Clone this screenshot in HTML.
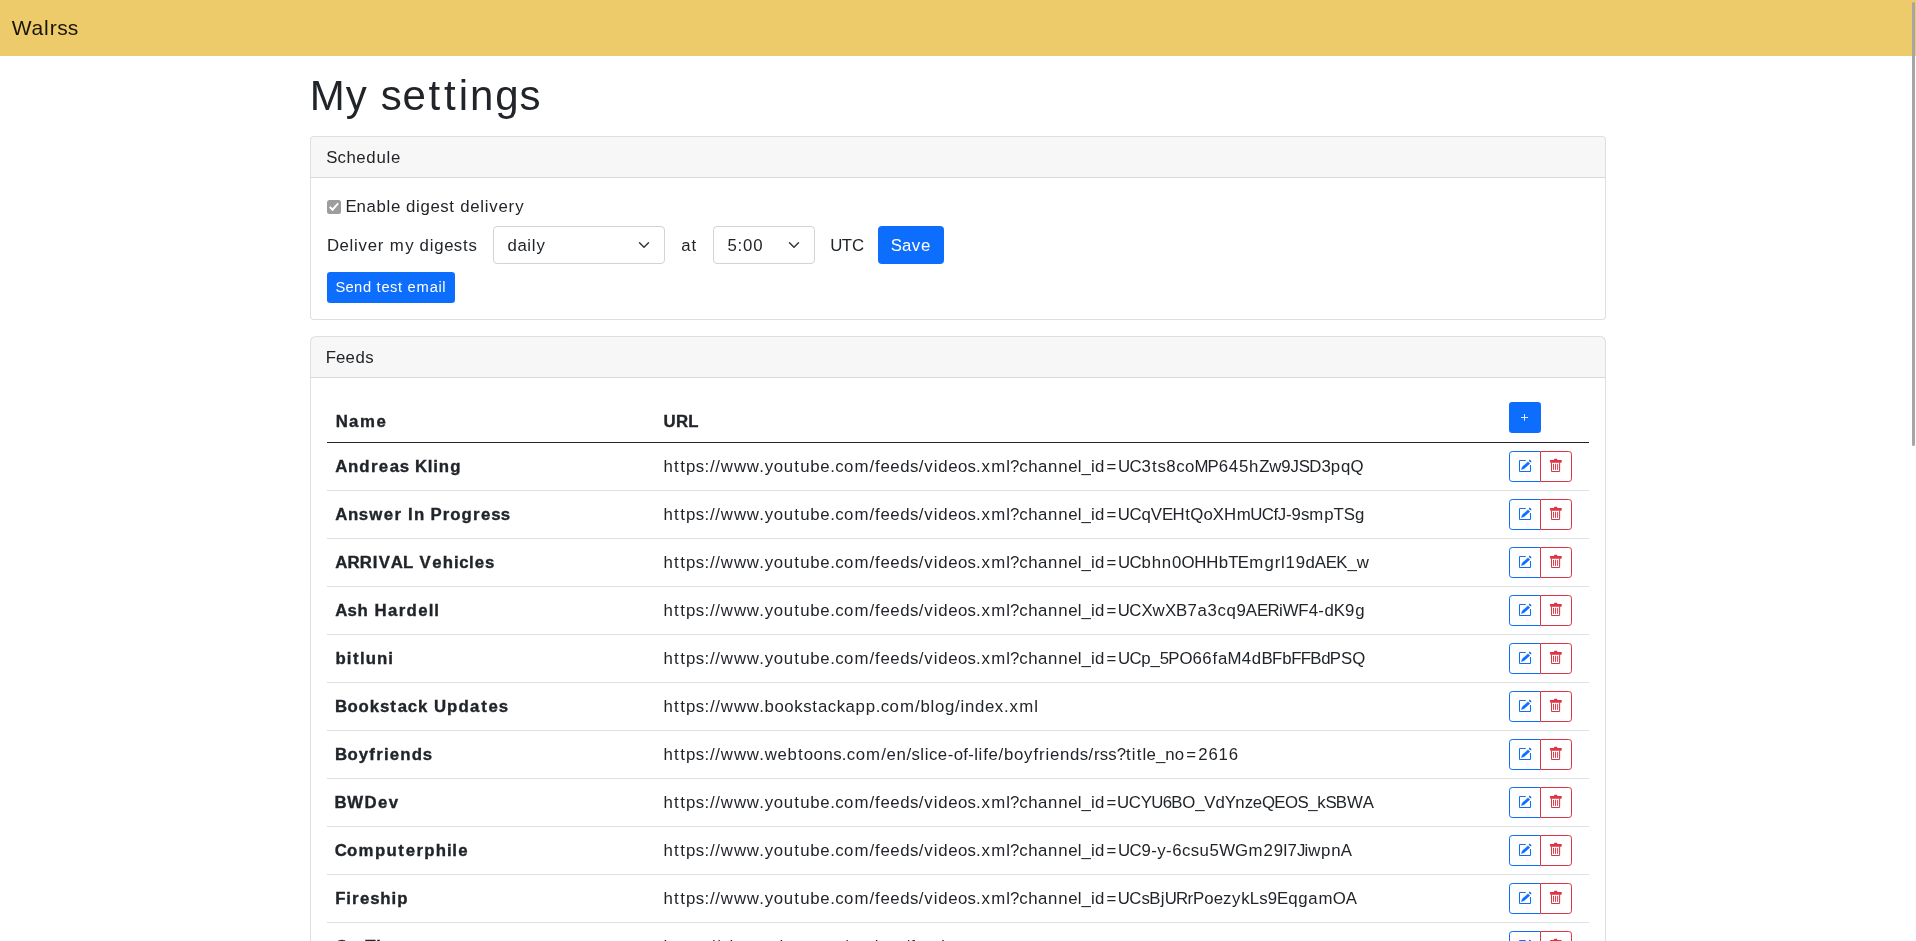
<!DOCTYPE html>
<html><head><meta charset="utf-8"><title>Walrss</title>
<style>
*{box-sizing:border-box}
html,body{margin:0;padding:0;background:#fff}
.container,.nav{will-change:transform}
body{font-family:'Liberation Sans', sans-serif;font-size:16.80px;line-height:24px;color:#212529;width:1916px;height:941px;overflow:hidden;position:relative}
.nav{height:56px;background:#edca6a;position:relative}
.brand{position:absolute;left:12px;top:13px;font-size:21.00px;line-height:30px;color:rgba(0,0,0,.9);white-space:pre}
.container{position:absolute;left:310px;top:72px;width:1296px}
h1{margin:0;font-size:42.00px;line-height:48px;font-weight:400;white-space:pre;height:48px}
.card{position:absolute;left:0;width:1296px;border:1px solid rgba(0,0,0,.125);border-radius:4px;background:#fff}
.card-h{height:41px;padding:8px 16px;background:rgba(0,0,0,.03);border-bottom:1px solid rgba(0,0,0,.125);border-radius:3px 3px 0 0;white-space:pre}
.dn{position:relative;top:1px}
.abs{position:absolute;white-space:pre}
.chk{position:absolute;left:16px;top:22px;width:14px;height:14px;background:#9d9d9d;border-radius:2.5px}
.sel{position:absolute;top:48px;height:38px;border:1px solid #ced4da;border-radius:4px;padding:6px 13px;white-space:pre;background:#fff}
.sel svg{position:absolute;right:12px;top:12px}
.btn{position:absolute;background:#0d6efd;color:#fff;border-radius:4px;white-space:pre;text-align:center}
table{position:absolute;left:16px;top:16px;width:1262px;border-collapse:collapse}
th,td{padding:8px;text-align:left;font-weight:700}
td{font-weight:400;border-bottom:1px solid #dee2e6;vertical-align:middle;height:48px}
th{vertical-align:bottom;height:48px}
thead tr{border-bottom:1px solid #212529}
.c1{width:328px} .c2{width:846px} .c3{width:88px}
td b{font-weight:700;white-space:pre}
th span,td b span{-webkit-text-stroke:0.35px currentColor}
td span{white-space:pre}
i{font-style:normal}
.bg{display:flex;height:31px}
.ob{width:32px;height:31px;border:1px solid;position:relative;background:#fff}
.ic{position:absolute;display:block}
.ob-p{border-color:#0d6efd;border-radius:3.2px 0 0 3.2px}
.ob-d{border-color:#dc3545;border-radius:0 3.2px 3.2px 0;margin-left:-1px}
.pbtn{width:32px;height:31px;background:#0d6efd;border-radius:3.2px;position:relative;top:-1px}
.sb{position:absolute;left:1911.5px;top:2px;width:3px;height:444px;background:#a6a6a6;border-radius:1.5px}
</style></head><body>
<div class="nav"><div class="brand"><span style="margin-left:-0.27px"><i style="letter-spacing:0.01px">W</i><i style="letter-spacing:0.73px">a</i><i style="letter-spacing:1.05px">l</i><i style="letter-spacing:0.54px">r</i><i style="letter-spacing:0.00px">s</i><i style="letter-spacing:-0.07px">s</i></span></div></div>
<div class="container">
<h1><span style="margin-left:-0.24px"><i style="letter-spacing:1.09px">M</i><i style="letter-spacing:1.86px">y</i><i style="letter-spacing:0.45px"> </i><i style="letter-spacing:0.55px">s</i><i style="letter-spacing:2.62px">e</i><i style="letter-spacing:4.02px">t</i><i style="letter-spacing:2.88px">t</i><i style="letter-spacing:1.89px">i</i><i style="letter-spacing:2.01px">n</i><i style="letter-spacing:0.94px">g</i><i style="letter-spacing:-0.07px">s</i></span></h1>
<div class="card" style="top:64px;height:184px">
 <div class="card-h"><span class="dn" style="margin-left:-0.68px"><i style="letter-spacing:0.00px">S</i><i style="letter-spacing:0.44px">c</i><i style="letter-spacing:0.65px">h</i><i style="letter-spacing:0.66px">e</i><i style="letter-spacing:0.80px">d</i><i style="letter-spacing:0.76px">u</i><i style="letter-spacing:0.60px">l</i><i style="letter-spacing:0.26px">e</i></span></div>
 <div style="position:relative">
  <div class="chk"><svg width="14" height="14" viewBox="0 0 14 14" style="display:block"><path d="M2.8 6.9L5.5 9.7L11.1 3.4" fill="none" stroke="#fff" stroke-width="2"/></svg></div>
  <div class="abs" style="left:35px;top:17px"><span style="margin-left:-0.55px"><i style="letter-spacing:-0.15px">E</i><i style="letter-spacing:0.63px">n</i><i style="letter-spacing:0.63px">a</i><i style="letter-spacing:0.76px">b</i><i style="letter-spacing:0.61px">l</i><i style="letter-spacing:0.46px">e</i><i style="letter-spacing:0.61px"> </i><i style="letter-spacing:0.76px">d</i><i style="letter-spacing:0.77px">i</i><i style="letter-spacing:0.66px">g</i><i style="letter-spacing:0.23px">e</i><i style="letter-spacing:0.77px">s</i><i style="letter-spacing:1.02px">t</i><i style="letter-spacing:0.61px"> </i><i style="letter-spacing:0.66px">d</i><i style="letter-spacing:0.60px">e</i><i style="letter-spacing:0.72px">l</i><i style="letter-spacing:0.89px">i</i><i style="letter-spacing:0.79px">v</i><i style="letter-spacing:0.74px">e</i><i style="letter-spacing:1.03px">r</i><i style="letter-spacing:0.55px">y</i></span></div>
  <div class="abs" style="left:16px;top:56px"><span style="margin-left:0.10px"><i style="letter-spacing:0.34px">D</i><i style="letter-spacing:0.60px">e</i><i style="letter-spacing:0.72px">l</i><i style="letter-spacing:0.89px">i</i><i style="letter-spacing:0.79px">v</i><i style="letter-spacing:0.74px">e</i><i style="letter-spacing:0.70px">r</i><i style="letter-spacing:1.02px"> </i><i style="letter-spacing:1.34px">m</i><i style="letter-spacing:0.74px">y</i><i style="letter-spacing:0.62px"> </i><i style="letter-spacing:0.77px">d</i><i style="letter-spacing:0.76px">i</i><i style="letter-spacing:0.66px">g</i><i style="letter-spacing:0.22px">e</i><i style="letter-spacing:0.78px">s</i><i style="letter-spacing:0.77px">t</i><i style="letter-spacing:-0.02px">s</i></span></div>
  <div class="sel" style="left:182px;width:172px"><span class="dn" style="margin-left:0.41px"><i style="letter-spacing:0.64px">d</i><i style="letter-spacing:0.58px">a</i><i style="letter-spacing:0.72px">i</i><i style="letter-spacing:0.89px">l</i><i style="letter-spacing:0.55px">y</i></span><svg width="16" height="12" viewBox="0 0 16 16" ><path d="m2 5 6 6 6-6" fill="none" stroke="#343a40" stroke-width="2" stroke-linecap="round" stroke-linejoin="round"/></svg></div>
  <div class="abs" style="left:370px;top:56px"><span style="margin-left:0.23px"><i style="letter-spacing:1.02px">a</i><i style="letter-spacing:0.80px">t</i></span></div>
  <div class="sel" style="left:402px;width:102px"><span class="dn" style="margin-left:0.42px"><i style="letter-spacing:0.77px">5</i><i style="letter-spacing:0.77px">:</i><i style="letter-spacing:0.84px">0</i><i style="letter-spacing:0.42px">0</i></span><svg width="16" height="12" viewBox="0 0 16 16" ><path d="m2 5 6 6 6-6" fill="none" stroke="#343a40" stroke-width="2" stroke-linecap="round" stroke-linejoin="round"/></svg></div>
  <div class="abs" style="left:520px;top:56px"><span style="margin-left:-0.87px"><i style="letter-spacing:-0.53px">U</i><i style="letter-spacing:-0.01px">T</i><i style="letter-spacing:-1.40px">C</i></span></div>
  <div class="btn" style="left:567px;top:48px;width:66px;height:38px;line-height:24px;padding:7px 0"><span class="dn" style="margin-left:-0.67px"><i style="letter-spacing:0.00px">S</i><i style="letter-spacing:0.62px">a</i><i style="letter-spacing:0.79px">v</i><i style="letter-spacing:0.26px">e</i></span></div>
  <div class="btn" style="left:16px;top:94px;width:128px;height:31px;font-size:14.70px;line-height:21px;padding:5px 0;border-radius:3.2px"><span style="margin-left:-0.57px"><i style="letter-spacing:0.00px">S</i><i style="letter-spacing:0.46px">e</i><i style="letter-spacing:0.70px">n</i><i style="letter-spacing:0.54px">d</i><i style="letter-spacing:0.88px"> </i><i style="letter-spacing:0.91px">t</i><i style="letter-spacing:0.20px">e</i><i style="letter-spacing:0.67px">s</i><i style="letter-spacing:0.88px">t</i><i style="letter-spacing:0.40px"> </i><i style="letter-spacing:0.91px">e</i><i style="letter-spacing:0.91px">m</i><i style="letter-spacing:0.51px">a</i><i style="letter-spacing:0.62px">i</i><i style="letter-spacing:0.31px">l</i></span></div>
 </div>
</div>
<div class="card" style="top:264px;height:700px;border-bottom:none;border-radius:6px 6px 0 0">
 <div class="card-h"><span class="dn" style="margin-left:-1.33px"><i style="letter-spacing:0.00px">F</i><i style="letter-spacing:0.14px">e</i><i style="letter-spacing:0.66px">e</i><i style="letter-spacing:0.38px">d</i><i style="letter-spacing:-0.02px">s</i></span></div>
 <div style="position:relative">
 <table>
  <thead><tr><th class="c1"><span style="margin-left:0.63px"><i style="letter-spacing:1.36px">N</i><i style="letter-spacing:1.60px">a</i><i style="letter-spacing:1.63px">m</i><i style="letter-spacing:0.76px">e</i></span></th><th class="c2"><span style="margin-left:0.44px"><i style="letter-spacing:0.52px">U</i><i style="letter-spacing:0.07px">R</i><i style="letter-spacing:-0.03px">L</i></span></th><th class="c3"><div class="pbtn"><svg class="ic" style="left:11px;top:11px" width="9" height="9" viewBox="0 0 9 9"><path d="M4.5 1V7.8M1 4.5H8" stroke="#fff" stroke-width="0.85"/></svg></div></th></tr></thead>
  <tbody>
  <tr><td class="c1"><b><span class="dn" style="margin-left:0.13px"><i style="letter-spacing:0.69px">A</i><i style="letter-spacing:1.16px">n</i><i style="letter-spacing:1.27px">d</i><i style="letter-spacing:1.43px">r</i><i style="letter-spacing:1.48px">e</i><i style="letter-spacing:0.82px">a</i><i style="letter-spacing:0.53px">s</i><i style="letter-spacing:0.59px"> </i><i style="letter-spacing:0.54px">K</i><i style="letter-spacing:0.81px">l</i><i style="letter-spacing:0.97px">i</i><i style="letter-spacing:1.16px">n</i><i style="letter-spacing:0.60px">g</i></span></b></td><td class="c2"><span class="dn" style="margin-left:0.40px"><i style="letter-spacing:1.20px">h</i><i style="letter-spacing:1.59px">t</i><i style="letter-spacing:1.21px">t</i><i style="letter-spacing:0.38px">p</i><i style="letter-spacing:0.33px">s</i><i style="letter-spacing:0.72px">:</i><i style="letter-spacing:0.72px">/</i><i style="letter-spacing:0.84px">/</i><i style="letter-spacing:0.97px">w</i><i style="letter-spacing:0.68px">w</i><i style="letter-spacing:0.42px">w</i><i style="letter-spacing:0.74px">.</i><i style="letter-spacing:0.76px">y</i><i style="letter-spacing:0.62px">o</i><i style="letter-spacing:1.20px">u</i><i style="letter-spacing:1.20px">t</i><i style="letter-spacing:0.80px">u</i><i style="letter-spacing:0.66px">b</i><i style="letter-spacing:0.45px">e</i><i style="letter-spacing:0.41px">.</i><i style="letter-spacing:0.43px">c</i><i style="letter-spacing:1.02px">o</i><i style="letter-spacing:1.16px">m</i><i style="letter-spacing:0.84px">/</i><i style="letter-spacing:0.73px">f</i><i style="letter-spacing:0.50px">e</i><i style="letter-spacing:0.66px">e</i><i style="letter-spacing:0.38px">d</i><i style="letter-spacing:0.34px">s</i><i style="letter-spacing:0.90px">/</i><i style="letter-spacing:0.90px">v</i><i style="letter-spacing:0.76px">i</i><i style="letter-spacing:0.66px">d</i><i style="letter-spacing:0.47px">e</i><i style="letter-spacing:0.20px">o</i><i style="letter-spacing:0.17px">s</i><i style="letter-spacing:0.75px">.</i><i style="letter-spacing:1.34px">x</i><i style="letter-spacing:1.12px">m</i><i style="letter-spacing:-0.13px">l</i><i style="letter-spacing:-0.01px">?</i><i style="letter-spacing:0.48px">c</i><i style="letter-spacing:0.62px">h</i><i style="letter-spacing:0.63px">a</i><i style="letter-spacing:0.80px">n</i><i style="letter-spacing:0.65px">n</i><i style="letter-spacing:0.29px">e</i><i style="letter-spacing:0.00px">l</i><i style="letter-spacing:-0.01px">_</i><i style="letter-spacing:0.45px">i</i><i style="letter-spacing:2.20px">d</i><i style="letter-spacing:1.47px">=</i><i style="letter-spacing:-0.52px">U</i><i style="letter-spacing:-0.01px">C</i><i style="letter-spacing:1.14px">3</i><i style="letter-spacing:0.77px">t</i><i style="letter-spacing:0.40px">s</i><i style="letter-spacing:0.62px">8</i><i style="letter-spacing:0.42px">c</i><i style="letter-spacing:0.14px">o</i><i style="letter-spacing:-1.05px">M</i><i style="letter-spacing:0.00px">P</i><i style="letter-spacing:0.65px">6</i><i style="letter-spacing:0.84px">4</i><i style="letter-spacing:0.81px">5</i><i style="letter-spacing:0.74px">h</i><i style="letter-spacing:-0.02px">Z</i><i style="letter-spacing:-0.19px">w</i><i style="letter-spacing:-0.19px">9</i><i style="letter-spacing:-0.14px">J</i><i style="letter-spacing:-0.67px">S</i><i style="letter-spacing:0.00px">D</i><i style="letter-spacing:0.09px">3</i><i style="letter-spacing:0.81px">p</i><i style="letter-spacing:0.17px">q</i><i style="letter-spacing:-0.23px">Q</i></span></td><td class="c3"><div class="bg"><div class="ob ob-p"><svg class="ic" style="left:7px;top:6px" width="18" height="18" viewBox="0 0 18 18"><path d="M8.7 2.5H2.5V13.5H13.5V7" fill="none" stroke="#0d6efd" stroke-width="1"/><path d="M4.25 11.5L7.01 10.74L12.79 5.64L11.13 3.76L5.35 8.86Z" fill="#0d6efd" stroke="#0d6efd" stroke-width="0.3" stroke-linejoin="round"/><path d="M12.7 2.6L13.5 3.35" stroke="#0d6efd" stroke-width="1.7" stroke-linecap="round"/></svg></div><div class="ob ob-d"><svg class="ic" style="left:4px;top:3px" width="20" height="20" viewBox="0 0 20 20"><rect x="4.9" y="4.9" width="11.9" height="2.8" rx="0.9" fill="#dc3545"/><rect x="9" y="3.7" width="3.3" height="1.8" rx="0.7" fill="#dc3545"/><path d="M6.5 7.7V15.7Q6.5 16.5 7.3 16.5H13.8Q14.6 16.5 14.6 15.7V7.7" fill="none" stroke="#dc3545" stroke-width="1.05"/><path d="M8.5 8.9V14.8M10.5 8.9V14.8M12.6 8.9V14.8" stroke="#dc3545" stroke-width="0.95"/></svg></div></div></td></tr><tr><td class="c1"><b><span class="dn" style="margin-left:0.13px"><i style="letter-spacing:0.69px">A</i><i style="letter-spacing:0.65px">n</i><i style="letter-spacing:0.95px">s</i><i style="letter-spacing:1.62px">w</i><i style="letter-spacing:1.43px">e</i><i style="letter-spacing:1.12px">r</i><i style="letter-spacing:1.09px"> </i><i style="letter-spacing:1.20px">I</i><i style="letter-spacing:1.02px">n</i><i style="letter-spacing:0.70px"> </i><i style="letter-spacing:0.95px">P</i><i style="letter-spacing:1.05px">r</i><i style="letter-spacing:0.95px">o</i><i style="letter-spacing:1.27px">g</i><i style="letter-spacing:1.43px">r</i><i style="letter-spacing:0.85px">e</i><i style="letter-spacing:0.17px">s</i><i style="letter-spacing:0.09px">s</i></span></b></td><td class="c2"><span class="dn" style="margin-left:0.40px"><i style="letter-spacing:1.20px">h</i><i style="letter-spacing:1.59px">t</i><i style="letter-spacing:1.21px">t</i><i style="letter-spacing:0.38px">p</i><i style="letter-spacing:0.33px">s</i><i style="letter-spacing:0.72px">:</i><i style="letter-spacing:0.72px">/</i><i style="letter-spacing:0.84px">/</i><i style="letter-spacing:0.97px">w</i><i style="letter-spacing:0.68px">w</i><i style="letter-spacing:0.42px">w</i><i style="letter-spacing:0.74px">.</i><i style="letter-spacing:0.76px">y</i><i style="letter-spacing:0.62px">o</i><i style="letter-spacing:1.20px">u</i><i style="letter-spacing:1.20px">t</i><i style="letter-spacing:0.80px">u</i><i style="letter-spacing:0.66px">b</i><i style="letter-spacing:0.45px">e</i><i style="letter-spacing:0.41px">.</i><i style="letter-spacing:0.43px">c</i><i style="letter-spacing:1.02px">o</i><i style="letter-spacing:1.16px">m</i><i style="letter-spacing:0.84px">/</i><i style="letter-spacing:0.73px">f</i><i style="letter-spacing:0.50px">e</i><i style="letter-spacing:0.66px">e</i><i style="letter-spacing:0.38px">d</i><i style="letter-spacing:0.34px">s</i><i style="letter-spacing:0.90px">/</i><i style="letter-spacing:0.90px">v</i><i style="letter-spacing:0.76px">i</i><i style="letter-spacing:0.66px">d</i><i style="letter-spacing:0.47px">e</i><i style="letter-spacing:0.20px">o</i><i style="letter-spacing:0.17px">s</i><i style="letter-spacing:0.75px">.</i><i style="letter-spacing:1.34px">x</i><i style="letter-spacing:1.12px">m</i><i style="letter-spacing:-0.13px">l</i><i style="letter-spacing:-0.01px">?</i><i style="letter-spacing:0.48px">c</i><i style="letter-spacing:0.62px">h</i><i style="letter-spacing:0.63px">a</i><i style="letter-spacing:0.80px">n</i><i style="letter-spacing:0.65px">n</i><i style="letter-spacing:0.29px">e</i><i style="letter-spacing:0.00px">l</i><i style="letter-spacing:-0.01px">_</i><i style="letter-spacing:0.45px">i</i><i style="letter-spacing:2.20px">d</i><i style="letter-spacing:1.39px">=</i><i style="letter-spacing:-0.56px">U</i><i style="letter-spacing:-0.03px">C</i><i style="letter-spacing:-0.03px">q</i><i style="letter-spacing:-0.01px">V</i><i style="letter-spacing:-0.60px">E</i><i style="letter-spacing:0.44px">H</i><i style="letter-spacing:0.55px">t</i><i style="letter-spacing:0.00px">Q</i><i style="letter-spacing:0.10px">o</i><i style="letter-spacing:-0.17px">X</i><i style="letter-spacing:0.75px">H</i><i style="letter-spacing:-0.41px">m</i><i style="letter-spacing:-0.81px">U</i><i style="letter-spacing:-0.31px">C</i><i style="letter-spacing:-0.28px">f</i><i style="letter-spacing:-0.20px">J</i><i style="letter-spacing:-0.10px">-</i><i style="letter-spacing:0.00px">9</i><i style="letter-spacing:0.02px">s</i><i style="letter-spacing:0.92px">m</i><i style="letter-spacing:-0.01px">p</i><i style="letter-spacing:-0.01px">T</i><i style="letter-spacing:0.00px">S</i><i style="letter-spacing:-0.02px">g</i></span></td><td class="c3"><div class="bg"><div class="ob ob-p"><svg class="ic" style="left:7px;top:6px" width="18" height="18" viewBox="0 0 18 18"><path d="M8.7 2.5H2.5V13.5H13.5V7" fill="none" stroke="#0d6efd" stroke-width="1"/><path d="M4.25 11.5L7.01 10.74L12.79 5.64L11.13 3.76L5.35 8.86Z" fill="#0d6efd" stroke="#0d6efd" stroke-width="0.3" stroke-linejoin="round"/><path d="M12.7 2.6L13.5 3.35" stroke="#0d6efd" stroke-width="1.7" stroke-linecap="round"/></svg></div><div class="ob ob-d"><svg class="ic" style="left:4px;top:3px" width="20" height="20" viewBox="0 0 20 20"><rect x="4.9" y="4.9" width="11.9" height="2.8" rx="0.9" fill="#dc3545"/><rect x="9" y="3.7" width="3.3" height="1.8" rx="0.7" fill="#dc3545"/><path d="M6.5 7.7V15.7Q6.5 16.5 7.3 16.5H13.8Q14.6 16.5 14.6 15.7V7.7" fill="none" stroke="#dc3545" stroke-width="1.05"/><path d="M8.5 8.9V14.8M10.5 8.9V14.8M12.6 8.9V14.8" stroke="#dc3545" stroke-width="0.95"/></svg></div></div></td></tr><tr><td class="c1"><b><span class="dn" style="margin-left:0.13px"><i style="letter-spacing:0.22px">A</i><i style="letter-spacing:0.20px">R</i><i style="letter-spacing:0.73px">R</i><i style="letter-spacing:1.31px">I</i><i style="letter-spacing:0.80px">V</i><i style="letter-spacing:0.26px">A</i><i style="letter-spacing:0.56px">L</i><i style="letter-spacing:1.07px"> </i><i style="letter-spacing:1.36px">V</i><i style="letter-spacing:1.32px">e</i><i style="letter-spacing:0.97px">h</i><i style="letter-spacing:0.48px">i</i><i style="letter-spacing:0.48px">c</i><i style="letter-spacing:1.16px">l</i><i style="letter-spacing:0.84px">e</i><i style="letter-spacing:0.09px">s</i></span></b></td><td class="c2"><span class="dn" style="margin-left:0.40px"><i style="letter-spacing:1.20px">h</i><i style="letter-spacing:1.59px">t</i><i style="letter-spacing:1.21px">t</i><i style="letter-spacing:0.38px">p</i><i style="letter-spacing:0.33px">s</i><i style="letter-spacing:0.72px">:</i><i style="letter-spacing:0.72px">/</i><i style="letter-spacing:0.84px">/</i><i style="letter-spacing:0.97px">w</i><i style="letter-spacing:0.68px">w</i><i style="letter-spacing:0.42px">w</i><i style="letter-spacing:0.74px">.</i><i style="letter-spacing:0.76px">y</i><i style="letter-spacing:0.62px">o</i><i style="letter-spacing:1.20px">u</i><i style="letter-spacing:1.20px">t</i><i style="letter-spacing:0.80px">u</i><i style="letter-spacing:0.66px">b</i><i style="letter-spacing:0.45px">e</i><i style="letter-spacing:0.41px">.</i><i style="letter-spacing:0.43px">c</i><i style="letter-spacing:1.02px">o</i><i style="letter-spacing:1.16px">m</i><i style="letter-spacing:0.84px">/</i><i style="letter-spacing:0.73px">f</i><i style="letter-spacing:0.50px">e</i><i style="letter-spacing:0.66px">e</i><i style="letter-spacing:0.38px">d</i><i style="letter-spacing:0.34px">s</i><i style="letter-spacing:0.90px">/</i><i style="letter-spacing:0.90px">v</i><i style="letter-spacing:0.76px">i</i><i style="letter-spacing:0.66px">d</i><i style="letter-spacing:0.47px">e</i><i style="letter-spacing:0.20px">o</i><i style="letter-spacing:0.17px">s</i><i style="letter-spacing:0.75px">.</i><i style="letter-spacing:1.34px">x</i><i style="letter-spacing:1.12px">m</i><i style="letter-spacing:-0.13px">l</i><i style="letter-spacing:-0.01px">?</i><i style="letter-spacing:0.48px">c</i><i style="letter-spacing:0.62px">h</i><i style="letter-spacing:0.63px">a</i><i style="letter-spacing:0.80px">n</i><i style="letter-spacing:0.65px">n</i><i style="letter-spacing:0.29px">e</i><i style="letter-spacing:0.00px">l</i><i style="letter-spacing:-0.01px">_</i><i style="letter-spacing:0.45px">i</i><i style="letter-spacing:2.20px">d</i><i style="letter-spacing:1.51px">=</i><i style="letter-spacing:-0.52px">U</i><i style="letter-spacing:-0.15px">C</i><i style="letter-spacing:0.80px">b</i><i style="letter-spacing:0.80px">h</i><i style="letter-spacing:0.81px">n</i><i style="letter-spacing:0.19px">0</i><i style="letter-spacing:-0.28px">O</i><i style="letter-spacing:-0.09px">H</i><i style="letter-spacing:0.36px">H</i><i style="letter-spacing:0.10px">b</i><i style="letter-spacing:-0.67px">T</i><i style="letter-spacing:0.18px">E</i><i style="letter-spacing:1.21px">m</i><i style="letter-spacing:0.90px">g</i><i style="letter-spacing:0.85px">r</i><i style="letter-spacing:0.77px">l</i><i style="letter-spacing:0.84px">1</i><i style="letter-spacing:0.36px">9</i><i style="letter-spacing:-0.14px">d</i><i style="letter-spacing:-0.14px">A</i><i style="letter-spacing:-0.71px">E</i><i style="letter-spacing:-0.05px">K</i><i style="letter-spacing:0.00px">_</i><i style="letter-spacing:-0.53px">w</i></span></td><td class="c3"><div class="bg"><div class="ob ob-p"><svg class="ic" style="left:7px;top:6px" width="18" height="18" viewBox="0 0 18 18"><path d="M8.7 2.5H2.5V13.5H13.5V7" fill="none" stroke="#0d6efd" stroke-width="1"/><path d="M4.25 11.5L7.01 10.74L12.79 5.64L11.13 3.76L5.35 8.86Z" fill="#0d6efd" stroke="#0d6efd" stroke-width="0.3" stroke-linejoin="round"/><path d="M12.7 2.6L13.5 3.35" stroke="#0d6efd" stroke-width="1.7" stroke-linecap="round"/></svg></div><div class="ob ob-d"><svg class="ic" style="left:4px;top:3px" width="20" height="20" viewBox="0 0 20 20"><rect x="4.9" y="4.9" width="11.9" height="2.8" rx="0.9" fill="#dc3545"/><rect x="9" y="3.7" width="3.3" height="1.8" rx="0.7" fill="#dc3545"/><path d="M6.5 7.7V15.7Q6.5 16.5 7.3 16.5H13.8Q14.6 16.5 14.6 15.7V7.7" fill="none" stroke="#dc3545" stroke-width="1.05"/><path d="M8.5 8.9V14.8M10.5 8.9V14.8M12.6 8.9V14.8" stroke="#dc3545" stroke-width="0.95"/></svg></div></div></td></tr><tr><td class="c1"><b><span class="dn" style="margin-left:0.13px"><i style="letter-spacing:0.21px">A</i><i style="letter-spacing:0.66px">s</i><i style="letter-spacing:1.02px">h</i><i style="letter-spacing:1.08px"> </i><i style="letter-spacing:1.36px">H</i><i style="letter-spacing:1.41px">a</i><i style="letter-spacing:1.27px">r</i><i style="letter-spacing:1.34px">d</i><i style="letter-spacing:1.16px">e</i><i style="letter-spacing:0.81px">l</i><i style="letter-spacing:0.41px">l</i></span></b></td><td class="c2"><span class="dn" style="margin-left:0.40px"><i style="letter-spacing:1.20px">h</i><i style="letter-spacing:1.59px">t</i><i style="letter-spacing:1.21px">t</i><i style="letter-spacing:0.38px">p</i><i style="letter-spacing:0.33px">s</i><i style="letter-spacing:0.72px">:</i><i style="letter-spacing:0.72px">/</i><i style="letter-spacing:0.84px">/</i><i style="letter-spacing:0.97px">w</i><i style="letter-spacing:0.68px">w</i><i style="letter-spacing:0.42px">w</i><i style="letter-spacing:0.74px">.</i><i style="letter-spacing:0.76px">y</i><i style="letter-spacing:0.62px">o</i><i style="letter-spacing:1.20px">u</i><i style="letter-spacing:1.20px">t</i><i style="letter-spacing:0.80px">u</i><i style="letter-spacing:0.66px">b</i><i style="letter-spacing:0.45px">e</i><i style="letter-spacing:0.41px">.</i><i style="letter-spacing:0.43px">c</i><i style="letter-spacing:1.02px">o</i><i style="letter-spacing:1.16px">m</i><i style="letter-spacing:0.84px">/</i><i style="letter-spacing:0.73px">f</i><i style="letter-spacing:0.50px">e</i><i style="letter-spacing:0.66px">e</i><i style="letter-spacing:0.38px">d</i><i style="letter-spacing:0.34px">s</i><i style="letter-spacing:0.90px">/</i><i style="letter-spacing:0.90px">v</i><i style="letter-spacing:0.76px">i</i><i style="letter-spacing:0.66px">d</i><i style="letter-spacing:0.47px">e</i><i style="letter-spacing:0.20px">o</i><i style="letter-spacing:0.17px">s</i><i style="letter-spacing:0.75px">.</i><i style="letter-spacing:1.34px">x</i><i style="letter-spacing:1.12px">m</i><i style="letter-spacing:-0.13px">l</i><i style="letter-spacing:-0.01px">?</i><i style="letter-spacing:0.48px">c</i><i style="letter-spacing:0.62px">h</i><i style="letter-spacing:0.63px">a</i><i style="letter-spacing:0.80px">n</i><i style="letter-spacing:0.65px">n</i><i style="letter-spacing:0.29px">e</i><i style="letter-spacing:0.00px">l</i><i style="letter-spacing:-0.01px">_</i><i style="letter-spacing:0.45px">i</i><i style="letter-spacing:2.20px">d</i><i style="letter-spacing:1.27px">=</i><i style="letter-spacing:-0.53px">U</i><i style="letter-spacing:0.00px">C</i><i style="letter-spacing:-0.01px">X</i><i style="letter-spacing:0.29px">w</i><i style="letter-spacing:-0.23px">X</i><i style="letter-spacing:0.30px">B</i><i style="letter-spacing:0.66px">7</i><i style="letter-spacing:0.64px">a</i><i style="letter-spacing:0.62px">3</i><i style="letter-spacing:0.61px">c</i><i style="letter-spacing:0.59px">q</i><i style="letter-spacing:-0.03px">9</i><i style="letter-spacing:-0.02px">A</i><i style="letter-spacing:-0.61px">E</i><i style="letter-spacing:-0.52px">R</i><i style="letter-spacing:-0.05px">i</i><i style="letter-spacing:-0.25px">W</i><i style="letter-spacing:0.00px">F</i><i style="letter-spacing:0.34px">4</i><i style="letter-spacing:0.49px">-</i><i style="letter-spacing:0.05px">d</i><i style="letter-spacing:0.07px">K</i><i style="letter-spacing:0.82px">9</i><i style="letter-spacing:0.41px">g</i></span></td><td class="c3"><div class="bg"><div class="ob ob-p"><svg class="ic" style="left:7px;top:6px" width="18" height="18" viewBox="0 0 18 18"><path d="M8.7 2.5H2.5V13.5H13.5V7" fill="none" stroke="#0d6efd" stroke-width="1"/><path d="M4.25 11.5L7.01 10.74L12.79 5.64L11.13 3.76L5.35 8.86Z" fill="#0d6efd" stroke="#0d6efd" stroke-width="0.3" stroke-linejoin="round"/><path d="M12.7 2.6L13.5 3.35" stroke="#0d6efd" stroke-width="1.7" stroke-linecap="round"/></svg></div><div class="ob ob-d"><svg class="ic" style="left:4px;top:3px" width="20" height="20" viewBox="0 0 20 20"><rect x="4.9" y="4.9" width="11.9" height="2.8" rx="0.9" fill="#dc3545"/><rect x="9" y="3.7" width="3.3" height="1.8" rx="0.7" fill="#dc3545"/><path d="M6.5 7.7V15.7Q6.5 16.5 7.3 16.5H13.8Q14.6 16.5 14.6 15.7V7.7" fill="none" stroke="#dc3545" stroke-width="1.05"/><path d="M8.5 8.9V14.8M10.5 8.9V14.8M12.6 8.9V14.8" stroke="#dc3545" stroke-width="0.95"/></svg></div></div></td></tr><tr><td class="c1"><b><span class="dn" style="margin-left:0.59px"><i style="letter-spacing:1.00px">b</i><i style="letter-spacing:1.44px">i</i><i style="letter-spacing:1.43px">t</i><i style="letter-spacing:0.97px">l</i><i style="letter-spacing:1.12px">u</i><i style="letter-spacing:0.97px">n</i><i style="letter-spacing:0.41px">i</i></span></b></td><td class="c2"><span class="dn" style="margin-left:0.40px"><i style="letter-spacing:1.20px">h</i><i style="letter-spacing:1.59px">t</i><i style="letter-spacing:1.21px">t</i><i style="letter-spacing:0.38px">p</i><i style="letter-spacing:0.33px">s</i><i style="letter-spacing:0.72px">:</i><i style="letter-spacing:0.72px">/</i><i style="letter-spacing:0.84px">/</i><i style="letter-spacing:0.97px">w</i><i style="letter-spacing:0.68px">w</i><i style="letter-spacing:0.42px">w</i><i style="letter-spacing:0.74px">.</i><i style="letter-spacing:0.76px">y</i><i style="letter-spacing:0.62px">o</i><i style="letter-spacing:1.20px">u</i><i style="letter-spacing:1.20px">t</i><i style="letter-spacing:0.80px">u</i><i style="letter-spacing:0.66px">b</i><i style="letter-spacing:0.45px">e</i><i style="letter-spacing:0.41px">.</i><i style="letter-spacing:0.43px">c</i><i style="letter-spacing:1.02px">o</i><i style="letter-spacing:1.16px">m</i><i style="letter-spacing:0.84px">/</i><i style="letter-spacing:0.73px">f</i><i style="letter-spacing:0.50px">e</i><i style="letter-spacing:0.66px">e</i><i style="letter-spacing:0.38px">d</i><i style="letter-spacing:0.34px">s</i><i style="letter-spacing:0.90px">/</i><i style="letter-spacing:0.90px">v</i><i style="letter-spacing:0.76px">i</i><i style="letter-spacing:0.66px">d</i><i style="letter-spacing:0.47px">e</i><i style="letter-spacing:0.20px">o</i><i style="letter-spacing:0.17px">s</i><i style="letter-spacing:0.75px">.</i><i style="letter-spacing:1.34px">x</i><i style="letter-spacing:1.12px">m</i><i style="letter-spacing:-0.13px">l</i><i style="letter-spacing:-0.01px">?</i><i style="letter-spacing:0.48px">c</i><i style="letter-spacing:0.62px">h</i><i style="letter-spacing:0.63px">a</i><i style="letter-spacing:0.80px">n</i><i style="letter-spacing:0.65px">n</i><i style="letter-spacing:0.29px">e</i><i style="letter-spacing:0.00px">l</i><i style="letter-spacing:-0.01px">_</i><i style="letter-spacing:0.45px">i</i><i style="letter-spacing:2.20px">d</i><i style="letter-spacing:1.51px">=</i><i style="letter-spacing:-0.52px">U</i><i style="letter-spacing:-0.54px">C</i><i style="letter-spacing:-0.06px">p</i><i style="letter-spacing:-0.06px">_</i><i style="letter-spacing:-0.79px">5</i><i style="letter-spacing:-0.02px">P</i><i style="letter-spacing:0.00px">O</i><i style="letter-spacing:0.45px">6</i><i style="letter-spacing:0.89px">6</i><i style="letter-spacing:0.72px">f</i><i style="letter-spacing:0.13px">a</i><i style="letter-spacing:0.34px">M</i><i style="letter-spacing:0.82px">4</i><i style="letter-spacing:0.27px">d</i><i style="letter-spacing:-0.60px">B</i><i style="letter-spacing:-0.14px">F</i><i style="letter-spacing:-0.40px">b</i><i style="letter-spacing:-0.73px">F</i><i style="letter-spacing:-0.75px">F</i><i style="letter-spacing:-0.09px">B</i><i style="letter-spacing:-0.81px">d</i><i style="letter-spacing:-0.03px">P</i><i style="letter-spacing:0.00px">S</i><i style="letter-spacing:-1.39px">Q</i></span></td><td class="c3"><div class="bg"><div class="ob ob-p"><svg class="ic" style="left:7px;top:6px" width="18" height="18" viewBox="0 0 18 18"><path d="M8.7 2.5H2.5V13.5H13.5V7" fill="none" stroke="#0d6efd" stroke-width="1"/><path d="M4.25 11.5L7.01 10.74L12.79 5.64L11.13 3.76L5.35 8.86Z" fill="#0d6efd" stroke="#0d6efd" stroke-width="0.3" stroke-linejoin="round"/><path d="M12.7 2.6L13.5 3.35" stroke="#0d6efd" stroke-width="1.7" stroke-linecap="round"/></svg></div><div class="ob ob-d"><svg class="ic" style="left:4px;top:3px" width="20" height="20" viewBox="0 0 20 20"><rect x="4.9" y="4.9" width="11.9" height="2.8" rx="0.9" fill="#dc3545"/><rect x="9" y="3.7" width="3.3" height="1.8" rx="0.7" fill="#dc3545"/><path d="M6.5 7.7V15.7Q6.5 16.5 7.3 16.5H13.8Q14.6 16.5 14.6 15.7V7.7" fill="none" stroke="#dc3545" stroke-width="1.05"/><path d="M8.5 8.9V14.8M10.5 8.9V14.8M12.6 8.9V14.8" stroke="#dc3545" stroke-width="0.95"/></svg></div></div></td></tr><tr><td class="c1"><b><span class="dn" style="margin-left:0.04px"><i style="letter-spacing:0.39px">B</i><i style="letter-spacing:0.73px">o</i><i style="letter-spacing:1.01px">o</i><i style="letter-spacing:0.73px">k</i><i style="letter-spacing:1.12px">s</i><i style="letter-spacing:1.75px">t</i><i style="letter-spacing:0.80px">a</i><i style="letter-spacing:0.72px">c</i><i style="letter-spacing:1.09px">k</i><i style="letter-spacing:0.89px"> </i><i style="letter-spacing:1.02px">U</i><i style="letter-spacing:1.19px">p</i><i style="letter-spacing:1.32px">d</i><i style="letter-spacing:1.75px">a</i><i style="letter-spacing:1.79px">t</i><i style="letter-spacing:0.84px">e</i><i style="letter-spacing:0.09px">s</i></span></b></td><td class="c2"><span class="dn" style="margin-left:0.40px"><i style="letter-spacing:1.20px">h</i><i style="letter-spacing:1.59px">t</i><i style="letter-spacing:1.21px">t</i><i style="letter-spacing:0.38px">p</i><i style="letter-spacing:0.33px">s</i><i style="letter-spacing:0.72px">:</i><i style="letter-spacing:0.72px">/</i><i style="letter-spacing:0.84px">/</i><i style="letter-spacing:0.97px">w</i><i style="letter-spacing:0.68px">w</i><i style="letter-spacing:0.42px">w</i><i style="letter-spacing:0.61px">.</i><i style="letter-spacing:0.62px">b</i><i style="letter-spacing:0.45px">o</i><i style="letter-spacing:0.66px">o</i><i style="letter-spacing:0.41px">k</i><i style="letter-spacing:0.78px">s</i><i style="letter-spacing:1.02px">t</i><i style="letter-spacing:0.44px">a</i><i style="letter-spacing:0.50px">c</i><i style="letter-spacing:0.53px">k</i><i style="letter-spacing:0.63px">a</i><i style="letter-spacing:0.81px">p</i><i style="letter-spacing:0.61px">p</i><i style="letter-spacing:0.41px">.</i><i style="letter-spacing:0.43px">c</i><i style="letter-spacing:1.02px">o</i><i style="letter-spacing:1.16px">m</i><i style="letter-spacing:0.77px">/</i><i style="letter-spacing:0.77px">b</i><i style="letter-spacing:0.57px">l</i><i style="letter-spacing:0.63px">o</i><i style="letter-spacing:0.77px">g</i><i style="letter-spacing:0.72px">/</i><i style="letter-spacing:0.75px">i</i><i style="letter-spacing:0.80px">n</i><i style="letter-spacing:0.52px">d</i><i style="letter-spacing:0.65px">e</i><i style="letter-spacing:0.74px">x</i><i style="letter-spacing:0.75px">.</i><i style="letter-spacing:1.34px">x</i><i style="letter-spacing:1.15px">m</i><i style="letter-spacing:0.36px">l</i></span></td><td class="c3"><div class="bg"><div class="ob ob-p"><svg class="ic" style="left:7px;top:6px" width="18" height="18" viewBox="0 0 18 18"><path d="M8.7 2.5H2.5V13.5H13.5V7" fill="none" stroke="#0d6efd" stroke-width="1"/><path d="M4.25 11.5L7.01 10.74L12.79 5.64L11.13 3.76L5.35 8.86Z" fill="#0d6efd" stroke="#0d6efd" stroke-width="0.3" stroke-linejoin="round"/><path d="M12.7 2.6L13.5 3.35" stroke="#0d6efd" stroke-width="1.7" stroke-linecap="round"/></svg></div><div class="ob ob-d"><svg class="ic" style="left:4px;top:3px" width="20" height="20" viewBox="0 0 20 20"><rect x="4.9" y="4.9" width="11.9" height="2.8" rx="0.9" fill="#dc3545"/><rect x="9" y="3.7" width="3.3" height="1.8" rx="0.7" fill="#dc3545"/><path d="M6.5 7.7V15.7Q6.5 16.5 7.3 16.5H13.8Q14.6 16.5 14.6 15.7V7.7" fill="none" stroke="#dc3545" stroke-width="1.05"/><path d="M8.5 8.9V14.8M10.5 8.9V14.8M12.6 8.9V14.8" stroke="#dc3545" stroke-width="0.95"/></svg></div></div></td></tr><tr><td class="c1"><b><span class="dn" style="margin-left:0.04px"><i style="letter-spacing:0.39px">B</i><i style="letter-spacing:0.91px">o</i><i style="letter-spacing:1.22px">y</i><i style="letter-spacing:1.37px">f</i><i style="letter-spacing:1.09px">r</i><i style="letter-spacing:1.16px">i</i><i style="letter-spacing:1.31px">e</i><i style="letter-spacing:1.16px">n</i><i style="letter-spacing:0.68px">d</i><i style="letter-spacing:0.09px">s</i></span></b></td><td class="c2"><span class="dn" style="margin-left:0.40px"><i style="letter-spacing:1.20px">h</i><i style="letter-spacing:1.59px">t</i><i style="letter-spacing:1.21px">t</i><i style="letter-spacing:0.38px">p</i><i style="letter-spacing:0.33px">s</i><i style="letter-spacing:0.72px">:</i><i style="letter-spacing:0.72px">/</i><i style="letter-spacing:0.84px">/</i><i style="letter-spacing:0.97px">w</i><i style="letter-spacing:0.68px">w</i><i style="letter-spacing:0.42px">w</i><i style="letter-spacing:0.68px">.</i><i style="letter-spacing:0.73px">w</i><i style="letter-spacing:0.66px">e</i><i style="letter-spacing:1.21px">b</i><i style="letter-spacing:1.02px">t</i><i style="letter-spacing:0.45px">o</i><i style="letter-spacing:0.62px">o</i><i style="letter-spacing:0.37px">n</i><i style="letter-spacing:0.19px">s</i><i style="letter-spacing:0.41px">.</i><i style="letter-spacing:0.42px">c</i><i style="letter-spacing:1.03px">o</i><i style="letter-spacing:1.16px">m</i><i style="letter-spacing:0.61px">/</i><i style="letter-spacing:0.65px">e</i><i style="letter-spacing:0.76px">n</i><i style="letter-spacing:0.33px">/</i><i style="letter-spacing:0.34px">s</i><i style="letter-spacing:0.70px">l</i><i style="letter-spacing:0.56px">i</i><i style="letter-spacing:0.45px">c</i><i style="letter-spacing:0.49px">e</i><i style="letter-spacing:0.45px">-</i><i style="letter-spacing:0.27px">o</i><i style="letter-spacing:0.12px">f</i><i style="letter-spacing:0.45px">-</i><i style="letter-spacing:0.70px">l</i><i style="letter-spacing:0.84px">i</i><i style="letter-spacing:0.73px">f</i><i style="letter-spacing:0.61px">e</i><i style="letter-spacing:0.77px">/</i><i style="letter-spacing:0.62px">b</i><i style="letter-spacing:0.77px">o</i><i style="letter-spacing:1.02px">y</i><i style="letter-spacing:0.97px">f</i><i style="letter-spacing:0.84px">r</i><i style="letter-spacing:0.61px">i</i><i style="letter-spacing:0.65px">e</i><i style="letter-spacing:0.80px">n</i><i style="letter-spacing:0.38px">d</i><i style="letter-spacing:0.33px">s</i><i style="letter-spacing:0.85px">/</i><i style="letter-spacing:0.28px">r</i><i style="letter-spacing:0.00px">s</i><i style="letter-spacing:-0.01px">s</i><i style="letter-spacing:0.06px">?</i><i style="letter-spacing:1.15px">t</i><i style="letter-spacing:1.16px">i</i><i style="letter-spacing:1.15px">t</i><i style="letter-spacing:0.24px">l</i><i style="letter-spacing:0.00px">e</i><i style="letter-spacing:-0.01px">_</i><i style="letter-spacing:0.31px">n</i><i style="letter-spacing:2.02px">o</i><i style="letter-spacing:2.21px">=</i><i style="letter-spacing:0.84px">2</i><i style="letter-spacing:0.83px">6</i><i style="letter-spacing:0.84px">1</i><i style="letter-spacing:0.42px">6</i></span></td><td class="c3"><div class="bg"><div class="ob ob-p"><svg class="ic" style="left:7px;top:6px" width="18" height="18" viewBox="0 0 18 18"><path d="M8.7 2.5H2.5V13.5H13.5V7" fill="none" stroke="#0d6efd" stroke-width="1"/><path d="M4.25 11.5L7.01 10.74L12.79 5.64L11.13 3.76L5.35 8.86Z" fill="#0d6efd" stroke="#0d6efd" stroke-width="0.3" stroke-linejoin="round"/><path d="M12.7 2.6L13.5 3.35" stroke="#0d6efd" stroke-width="1.7" stroke-linecap="round"/></svg></div><div class="ob ob-d"><svg class="ic" style="left:4px;top:3px" width="20" height="20" viewBox="0 0 20 20"><rect x="4.9" y="4.9" width="11.9" height="2.8" rx="0.9" fill="#dc3545"/><rect x="9" y="3.7" width="3.3" height="1.8" rx="0.7" fill="#dc3545"/><path d="M6.5 7.7V15.7Q6.5 16.5 7.3 16.5H13.8Q14.6 16.5 14.6 15.7V7.7" fill="none" stroke="#dc3545" stroke-width="1.05"/><path d="M8.5 8.9V14.8M10.5 8.9V14.8M12.6 8.9V14.8" stroke="#dc3545" stroke-width="0.95"/></svg></div></div></td></tr><tr><td class="c1"><b><span class="dn" style="margin-left:-0.40px"><i style="letter-spacing:0.49px">B</i><i style="letter-spacing:1.48px">W</i><i style="letter-spacing:1.34px">D</i><i style="letter-spacing:1.29px">e</i><i style="letter-spacing:0.55px">v</i></span></b></td><td class="c2"><span class="dn" style="margin-left:0.40px"><i style="letter-spacing:1.20px">h</i><i style="letter-spacing:1.59px">t</i><i style="letter-spacing:1.21px">t</i><i style="letter-spacing:0.38px">p</i><i style="letter-spacing:0.33px">s</i><i style="letter-spacing:0.72px">:</i><i style="letter-spacing:0.72px">/</i><i style="letter-spacing:0.84px">/</i><i style="letter-spacing:0.97px">w</i><i style="letter-spacing:0.68px">w</i><i style="letter-spacing:0.42px">w</i><i style="letter-spacing:0.74px">.</i><i style="letter-spacing:0.76px">y</i><i style="letter-spacing:0.62px">o</i><i style="letter-spacing:1.20px">u</i><i style="letter-spacing:1.20px">t</i><i style="letter-spacing:0.80px">u</i><i style="letter-spacing:0.66px">b</i><i style="letter-spacing:0.45px">e</i><i style="letter-spacing:0.41px">.</i><i style="letter-spacing:0.43px">c</i><i style="letter-spacing:1.02px">o</i><i style="letter-spacing:1.16px">m</i><i style="letter-spacing:0.84px">/</i><i style="letter-spacing:0.73px">f</i><i style="letter-spacing:0.50px">e</i><i style="letter-spacing:0.66px">e</i><i style="letter-spacing:0.38px">d</i><i style="letter-spacing:0.34px">s</i><i style="letter-spacing:0.90px">/</i><i style="letter-spacing:0.90px">v</i><i style="letter-spacing:0.76px">i</i><i style="letter-spacing:0.66px">d</i><i style="letter-spacing:0.47px">e</i><i style="letter-spacing:0.20px">o</i><i style="letter-spacing:0.17px">s</i><i style="letter-spacing:0.75px">.</i><i style="letter-spacing:1.34px">x</i><i style="letter-spacing:1.12px">m</i><i style="letter-spacing:-0.13px">l</i><i style="letter-spacing:-0.01px">?</i><i style="letter-spacing:0.48px">c</i><i style="letter-spacing:0.62px">h</i><i style="letter-spacing:0.63px">a</i><i style="letter-spacing:0.80px">n</i><i style="letter-spacing:0.65px">n</i><i style="letter-spacing:0.29px">e</i><i style="letter-spacing:0.00px">l</i><i style="letter-spacing:-0.01px">_</i><i style="letter-spacing:0.45px">i</i><i style="letter-spacing:2.20px">d</i><i style="letter-spacing:0.64px">=</i><i style="letter-spacing:-0.57px">U</i><i style="letter-spacing:-0.04px">C</i><i style="letter-spacing:-0.66px">Y</i><i style="letter-spacing:-0.63px">U</i><i style="letter-spacing:-0.89px">6</i><i style="letter-spacing:-0.17px">B</i><i style="letter-spacing:-0.16px">O</i><i style="letter-spacing:-0.14px">_</i><i style="letter-spacing:-0.10px">V</i><i style="letter-spacing:-0.05px">d</i><i style="letter-spacing:-0.60px">Y</i><i style="letter-spacing:-0.04px">n</i><i style="letter-spacing:-0.20px">z</i><i style="letter-spacing:-0.29px">e</i><i style="letter-spacing:-0.82px">Q</i><i style="letter-spacing:-0.40px">E</i><i style="letter-spacing:-0.42px">O</i><i style="letter-spacing:-0.41px">S</i><i style="letter-spacing:-0.37px">_</i><i style="letter-spacing:-0.30px">k</i><i style="letter-spacing:-0.81px">S</i><i style="letter-spacing:-0.10px">B</i><i style="letter-spacing:0.00px">W</i><i style="letter-spacing:-1.16px">A</i></span></td><td class="c3"><div class="bg"><div class="ob ob-p"><svg class="ic" style="left:7px;top:6px" width="18" height="18" viewBox="0 0 18 18"><path d="M8.7 2.5H2.5V13.5H13.5V7" fill="none" stroke="#0d6efd" stroke-width="1"/><path d="M4.25 11.5L7.01 10.74L12.79 5.64L11.13 3.76L5.35 8.86Z" fill="#0d6efd" stroke="#0d6efd" stroke-width="0.3" stroke-linejoin="round"/><path d="M12.7 2.6L13.5 3.35" stroke="#0d6efd" stroke-width="1.7" stroke-linecap="round"/></svg></div><div class="ob ob-d"><svg class="ic" style="left:4px;top:3px" width="20" height="20" viewBox="0 0 20 20"><rect x="4.9" y="4.9" width="11.9" height="2.8" rx="0.9" fill="#dc3545"/><rect x="9" y="3.7" width="3.3" height="1.8" rx="0.7" fill="#dc3545"/><path d="M6.5 7.7V15.7Q6.5 16.5 7.3 16.5H13.8Q14.6 16.5 14.6 15.7V7.7" fill="none" stroke="#dc3545" stroke-width="1.05"/><path d="M8.5 8.9V14.8M10.5 8.9V14.8M12.6 8.9V14.8" stroke="#dc3545" stroke-width="0.95"/></svg></div></div></td></tr><tr><td class="c1"><b><span class="dn" style="margin-left:-0.19px"><i style="letter-spacing:0.16px">C</i><i style="letter-spacing:1.24px">o</i><i style="letter-spacing:1.47px">m</i><i style="letter-spacing:1.16px">p</i><i style="letter-spacing:1.59px">u</i><i style="letter-spacing:1.77px">t</i><i style="letter-spacing:1.44px">e</i><i style="letter-spacing:1.27px">r</i><i style="letter-spacing:1.16px">p</i><i style="letter-spacing:0.97px">h</i><i style="letter-spacing:0.81px">i</i><i style="letter-spacing:1.16px">l</i><i style="letter-spacing:0.76px">e</i></span></b></td><td class="c2"><span class="dn" style="margin-left:0.40px"><i style="letter-spacing:1.20px">h</i><i style="letter-spacing:1.59px">t</i><i style="letter-spacing:1.21px">t</i><i style="letter-spacing:0.38px">p</i><i style="letter-spacing:0.33px">s</i><i style="letter-spacing:0.72px">:</i><i style="letter-spacing:0.72px">/</i><i style="letter-spacing:0.84px">/</i><i style="letter-spacing:0.97px">w</i><i style="letter-spacing:0.68px">w</i><i style="letter-spacing:0.42px">w</i><i style="letter-spacing:0.74px">.</i><i style="letter-spacing:0.76px">y</i><i style="letter-spacing:0.62px">o</i><i style="letter-spacing:1.20px">u</i><i style="letter-spacing:1.20px">t</i><i style="letter-spacing:0.80px">u</i><i style="letter-spacing:0.66px">b</i><i style="letter-spacing:0.45px">e</i><i style="letter-spacing:0.41px">.</i><i style="letter-spacing:0.43px">c</i><i style="letter-spacing:1.02px">o</i><i style="letter-spacing:1.16px">m</i><i style="letter-spacing:0.84px">/</i><i style="letter-spacing:0.73px">f</i><i style="letter-spacing:0.50px">e</i><i style="letter-spacing:0.66px">e</i><i style="letter-spacing:0.38px">d</i><i style="letter-spacing:0.34px">s</i><i style="letter-spacing:0.90px">/</i><i style="letter-spacing:0.90px">v</i><i style="letter-spacing:0.76px">i</i><i style="letter-spacing:0.66px">d</i><i style="letter-spacing:0.47px">e</i><i style="letter-spacing:0.20px">o</i><i style="letter-spacing:0.17px">s</i><i style="letter-spacing:0.75px">.</i><i style="letter-spacing:1.34px">x</i><i style="letter-spacing:1.12px">m</i><i style="letter-spacing:-0.13px">l</i><i style="letter-spacing:-0.01px">?</i><i style="letter-spacing:0.48px">c</i><i style="letter-spacing:0.62px">h</i><i style="letter-spacing:0.63px">a</i><i style="letter-spacing:0.80px">n</i><i style="letter-spacing:0.65px">n</i><i style="letter-spacing:0.29px">e</i><i style="letter-spacing:0.00px">l</i><i style="letter-spacing:-0.01px">_</i><i style="letter-spacing:0.45px">i</i><i style="letter-spacing:2.20px">d</i><i style="letter-spacing:1.47px">=</i><i style="letter-spacing:-0.52px">U</i><i style="letter-spacing:-0.01px">C</i><i style="letter-spacing:0.29px">9</i><i style="letter-spacing:0.34px">-</i><i style="letter-spacing:0.48px">y</i><i style="letter-spacing:0.52px">-</i><i style="letter-spacing:0.62px">6</i><i style="letter-spacing:0.17px">c</i><i style="letter-spacing:0.38px">s</i><i style="letter-spacing:0.82px">u</i><i style="letter-spacing:0.23px">5</i><i style="letter-spacing:0.00px">W</i><i style="letter-spacing:0.29px">G</i><i style="letter-spacing:1.23px">m</i><i style="letter-spacing:0.83px">2</i><i style="letter-spacing:-0.04px">9</i><i style="letter-spacing:-0.12px">I</i><i style="letter-spacing:-0.04px">7</i><i style="letter-spacing:-0.81px">J</i><i style="letter-spacing:0.00px">i</i><i style="letter-spacing:0.71px">w</i><i style="letter-spacing:0.80px">p</i><i style="letter-spacing:0.27px">n</i><i style="letter-spacing:-0.12px">A</i></span></td><td class="c3"><div class="bg"><div class="ob ob-p"><svg class="ic" style="left:7px;top:6px" width="18" height="18" viewBox="0 0 18 18"><path d="M8.7 2.5H2.5V13.5H13.5V7" fill="none" stroke="#0d6efd" stroke-width="1"/><path d="M4.25 11.5L7.01 10.74L12.79 5.64L11.13 3.76L5.35 8.86Z" fill="#0d6efd" stroke="#0d6efd" stroke-width="0.3" stroke-linejoin="round"/><path d="M12.7 2.6L13.5 3.35" stroke="#0d6efd" stroke-width="1.7" stroke-linecap="round"/></svg></div><div class="ob ob-d"><svg class="ic" style="left:4px;top:3px" width="20" height="20" viewBox="0 0 20 20"><rect x="4.9" y="4.9" width="11.9" height="2.8" rx="0.9" fill="#dc3545"/><rect x="9" y="3.7" width="3.3" height="1.8" rx="0.7" fill="#dc3545"/><path d="M6.5 7.7V15.7Q6.5 16.5 7.3 16.5H13.8Q14.6 16.5 14.6 15.7V7.7" fill="none" stroke="#dc3545" stroke-width="1.05"/><path d="M8.5 8.9V14.8M10.5 8.9V14.8M12.6 8.9V14.8" stroke="#dc3545" stroke-width="0.95"/></svg></div></div></td></tr><tr><td class="c1"><b><span class="dn" style="margin-left:0.34px"><i style="letter-spacing:0.73px">F</i><i style="letter-spacing:1.09px">i</i><i style="letter-spacing:1.43px">r</i><i style="letter-spacing:0.85px">e</i><i style="letter-spacing:0.65px">s</i><i style="letter-spacing:0.97px">h</i><i style="letter-spacing:1.00px">i</i><i style="letter-spacing:0.60px">p</i></span></b></td><td class="c2"><span class="dn" style="margin-left:0.40px"><i style="letter-spacing:1.20px">h</i><i style="letter-spacing:1.59px">t</i><i style="letter-spacing:1.21px">t</i><i style="letter-spacing:0.38px">p</i><i style="letter-spacing:0.33px">s</i><i style="letter-spacing:0.72px">:</i><i style="letter-spacing:0.72px">/</i><i style="letter-spacing:0.84px">/</i><i style="letter-spacing:0.97px">w</i><i style="letter-spacing:0.68px">w</i><i style="letter-spacing:0.42px">w</i><i style="letter-spacing:0.74px">.</i><i style="letter-spacing:0.76px">y</i><i style="letter-spacing:0.62px">o</i><i style="letter-spacing:1.20px">u</i><i style="letter-spacing:1.20px">t</i><i style="letter-spacing:0.80px">u</i><i style="letter-spacing:0.66px">b</i><i style="letter-spacing:0.45px">e</i><i style="letter-spacing:0.41px">.</i><i style="letter-spacing:0.43px">c</i><i style="letter-spacing:1.02px">o</i><i style="letter-spacing:1.16px">m</i><i style="letter-spacing:0.84px">/</i><i style="letter-spacing:0.73px">f</i><i style="letter-spacing:0.50px">e</i><i style="letter-spacing:0.66px">e</i><i style="letter-spacing:0.38px">d</i><i style="letter-spacing:0.34px">s</i><i style="letter-spacing:0.90px">/</i><i style="letter-spacing:0.90px">v</i><i style="letter-spacing:0.76px">i</i><i style="letter-spacing:0.66px">d</i><i style="letter-spacing:0.47px">e</i><i style="letter-spacing:0.20px">o</i><i style="letter-spacing:0.17px">s</i><i style="letter-spacing:0.75px">.</i><i style="letter-spacing:1.34px">x</i><i style="letter-spacing:1.12px">m</i><i style="letter-spacing:-0.13px">l</i><i style="letter-spacing:-0.01px">?</i><i style="letter-spacing:0.48px">c</i><i style="letter-spacing:0.62px">h</i><i style="letter-spacing:0.63px">a</i><i style="letter-spacing:0.80px">n</i><i style="letter-spacing:0.65px">n</i><i style="letter-spacing:0.29px">e</i><i style="letter-spacing:0.00px">l</i><i style="letter-spacing:-0.01px">_</i><i style="letter-spacing:0.45px">i</i><i style="letter-spacing:2.20px">d</i><i style="letter-spacing:1.32px">=</i><i style="letter-spacing:-0.52px">U</i><i style="letter-spacing:-0.01px">C</i><i style="letter-spacing:-0.52px">s</i><i style="letter-spacing:0.23px">B</i><i style="letter-spacing:0.16px">j</i><i style="letter-spacing:-0.85px">U</i><i style="letter-spacing:-0.55px">R</i><i style="letter-spacing:-0.02px">r</i><i style="letter-spacing:-0.01px">P</i><i style="letter-spacing:0.00px">o</i><i style="letter-spacing:0.02px">e</i><i style="letter-spacing:0.55px">z</i><i style="letter-spacing:0.98px">y</i><i style="letter-spacing:0.10px">k</i><i style="letter-spacing:0.00px">L</i><i style="letter-spacing:0.27px">s</i><i style="letter-spacing:-0.20px">9</i><i style="letter-spacing:0.00px">E</i><i style="letter-spacing:0.74px">q</i><i style="letter-spacing:0.63px">g</i><i style="letter-spacing:1.04px">a</i><i style="letter-spacing:0.17px">m</i><i style="letter-spacing:0.00px">O</i><i style="letter-spacing:-0.38px">A</i></span></td><td class="c3"><div class="bg"><div class="ob ob-p"><svg class="ic" style="left:7px;top:6px" width="18" height="18" viewBox="0 0 18 18"><path d="M8.7 2.5H2.5V13.5H13.5V7" fill="none" stroke="#0d6efd" stroke-width="1"/><path d="M4.25 11.5L7.01 10.74L12.79 5.64L11.13 3.76L5.35 8.86Z" fill="#0d6efd" stroke="#0d6efd" stroke-width="0.3" stroke-linejoin="round"/><path d="M12.7 2.6L13.5 3.35" stroke="#0d6efd" stroke-width="1.7" stroke-linecap="round"/></svg></div><div class="ob ob-d"><svg class="ic" style="left:4px;top:3px" width="20" height="20" viewBox="0 0 20 20"><rect x="4.9" y="4.9" width="11.9" height="2.8" rx="0.9" fill="#dc3545"/><rect x="9" y="3.7" width="3.3" height="1.8" rx="0.7" fill="#dc3545"/><path d="M6.5 7.7V15.7Q6.5 16.5 7.3 16.5H13.8Q14.6 16.5 14.6 15.7V7.7" fill="none" stroke="#dc3545" stroke-width="1.05"/><path d="M8.5 8.9V14.8M10.5 8.9V14.8M12.6 8.9V14.8" stroke="#dc3545" stroke-width="0.95"/></svg></div></div></td></tr><tr><td class="c1"><b><span class="dn" style="margin-left:0.04px"><i style="letter-spacing:0.39px">G</i><i style="letter-spacing:0.82px">o</i><i style="letter-spacing:0.92px"> </i><i style="letter-spacing:0.89px">T</i><i style="letter-spacing:1.28px">i</i><i style="letter-spacing:1.63px">m</i><i style="letter-spacing:0.76px">e</i></span></b></td><td class="c2"><span class="dn" style="margin-left:0.40px"><i style="letter-spacing:1.20px">h</i><i style="letter-spacing:1.59px">t</i><i style="letter-spacing:1.21px">t</i><i style="letter-spacing:0.38px">p</i><i style="letter-spacing:0.33px">s</i><i style="letter-spacing:0.72px">:</i><i style="letter-spacing:0.72px">/</i><i style="letter-spacing:0.56px">/</i><i style="letter-spacing:0.60px">c</i><i style="letter-spacing:0.62px">h</i><i style="letter-spacing:0.63px">a</i><i style="letter-spacing:0.80px">n</i><i style="letter-spacing:0.66px">g</i><i style="letter-spacing:0.61px">e</i><i style="letter-spacing:0.57px">l</i><i style="letter-spacing:0.63px">o</i><i style="letter-spacing:0.62px">g</i><i style="letter-spacing:0.41px">.</i><i style="letter-spacing:0.42px">c</i><i style="letter-spacing:1.03px">o</i><i style="letter-spacing:1.16px">m</i><i style="letter-spacing:0.77px">/</i><i style="letter-spacing:0.62px">g</i><i style="letter-spacing:1.03px">o</i><i style="letter-spacing:1.15px">t</i><i style="letter-spacing:1.16px">i</i><i style="letter-spacing:1.05px">m</i><i style="letter-spacing:0.61px">e</i><i style="letter-spacing:0.84px">/</i><i style="letter-spacing:0.73px">f</i><i style="letter-spacing:0.50px">e</i><i style="letter-spacing:0.66px">e</i><i style="letter-spacing:0.41px">d</i></span></td><td class="c3"><div class="bg"><div class="ob ob-p"><svg class="ic" style="left:7px;top:6px" width="18" height="18" viewBox="0 0 18 18"><path d="M8.7 2.5H2.5V13.5H13.5V7" fill="none" stroke="#0d6efd" stroke-width="1"/><path d="M4.25 11.5L7.01 10.74L12.79 5.64L11.13 3.76L5.35 8.86Z" fill="#0d6efd" stroke="#0d6efd" stroke-width="0.3" stroke-linejoin="round"/><path d="M12.7 2.6L13.5 3.35" stroke="#0d6efd" stroke-width="1.7" stroke-linecap="round"/></svg></div><div class="ob ob-d"><svg class="ic" style="left:4px;top:3px" width="20" height="20" viewBox="0 0 20 20"><rect x="4.9" y="4.9" width="11.9" height="2.8" rx="0.9" fill="#dc3545"/><rect x="9" y="3.7" width="3.3" height="1.8" rx="0.7" fill="#dc3545"/><path d="M6.5 7.7V15.7Q6.5 16.5 7.3 16.5H13.8Q14.6 16.5 14.6 15.7V7.7" fill="none" stroke="#dc3545" stroke-width="1.05"/><path d="M8.5 8.9V14.8M10.5 8.9V14.8M12.6 8.9V14.8" stroke="#dc3545" stroke-width="0.95"/></svg></div></div></td></tr>
  </tbody>
 </table>
 </div>
</div>
</div>
<div class="sb"></div>
</body></html>
